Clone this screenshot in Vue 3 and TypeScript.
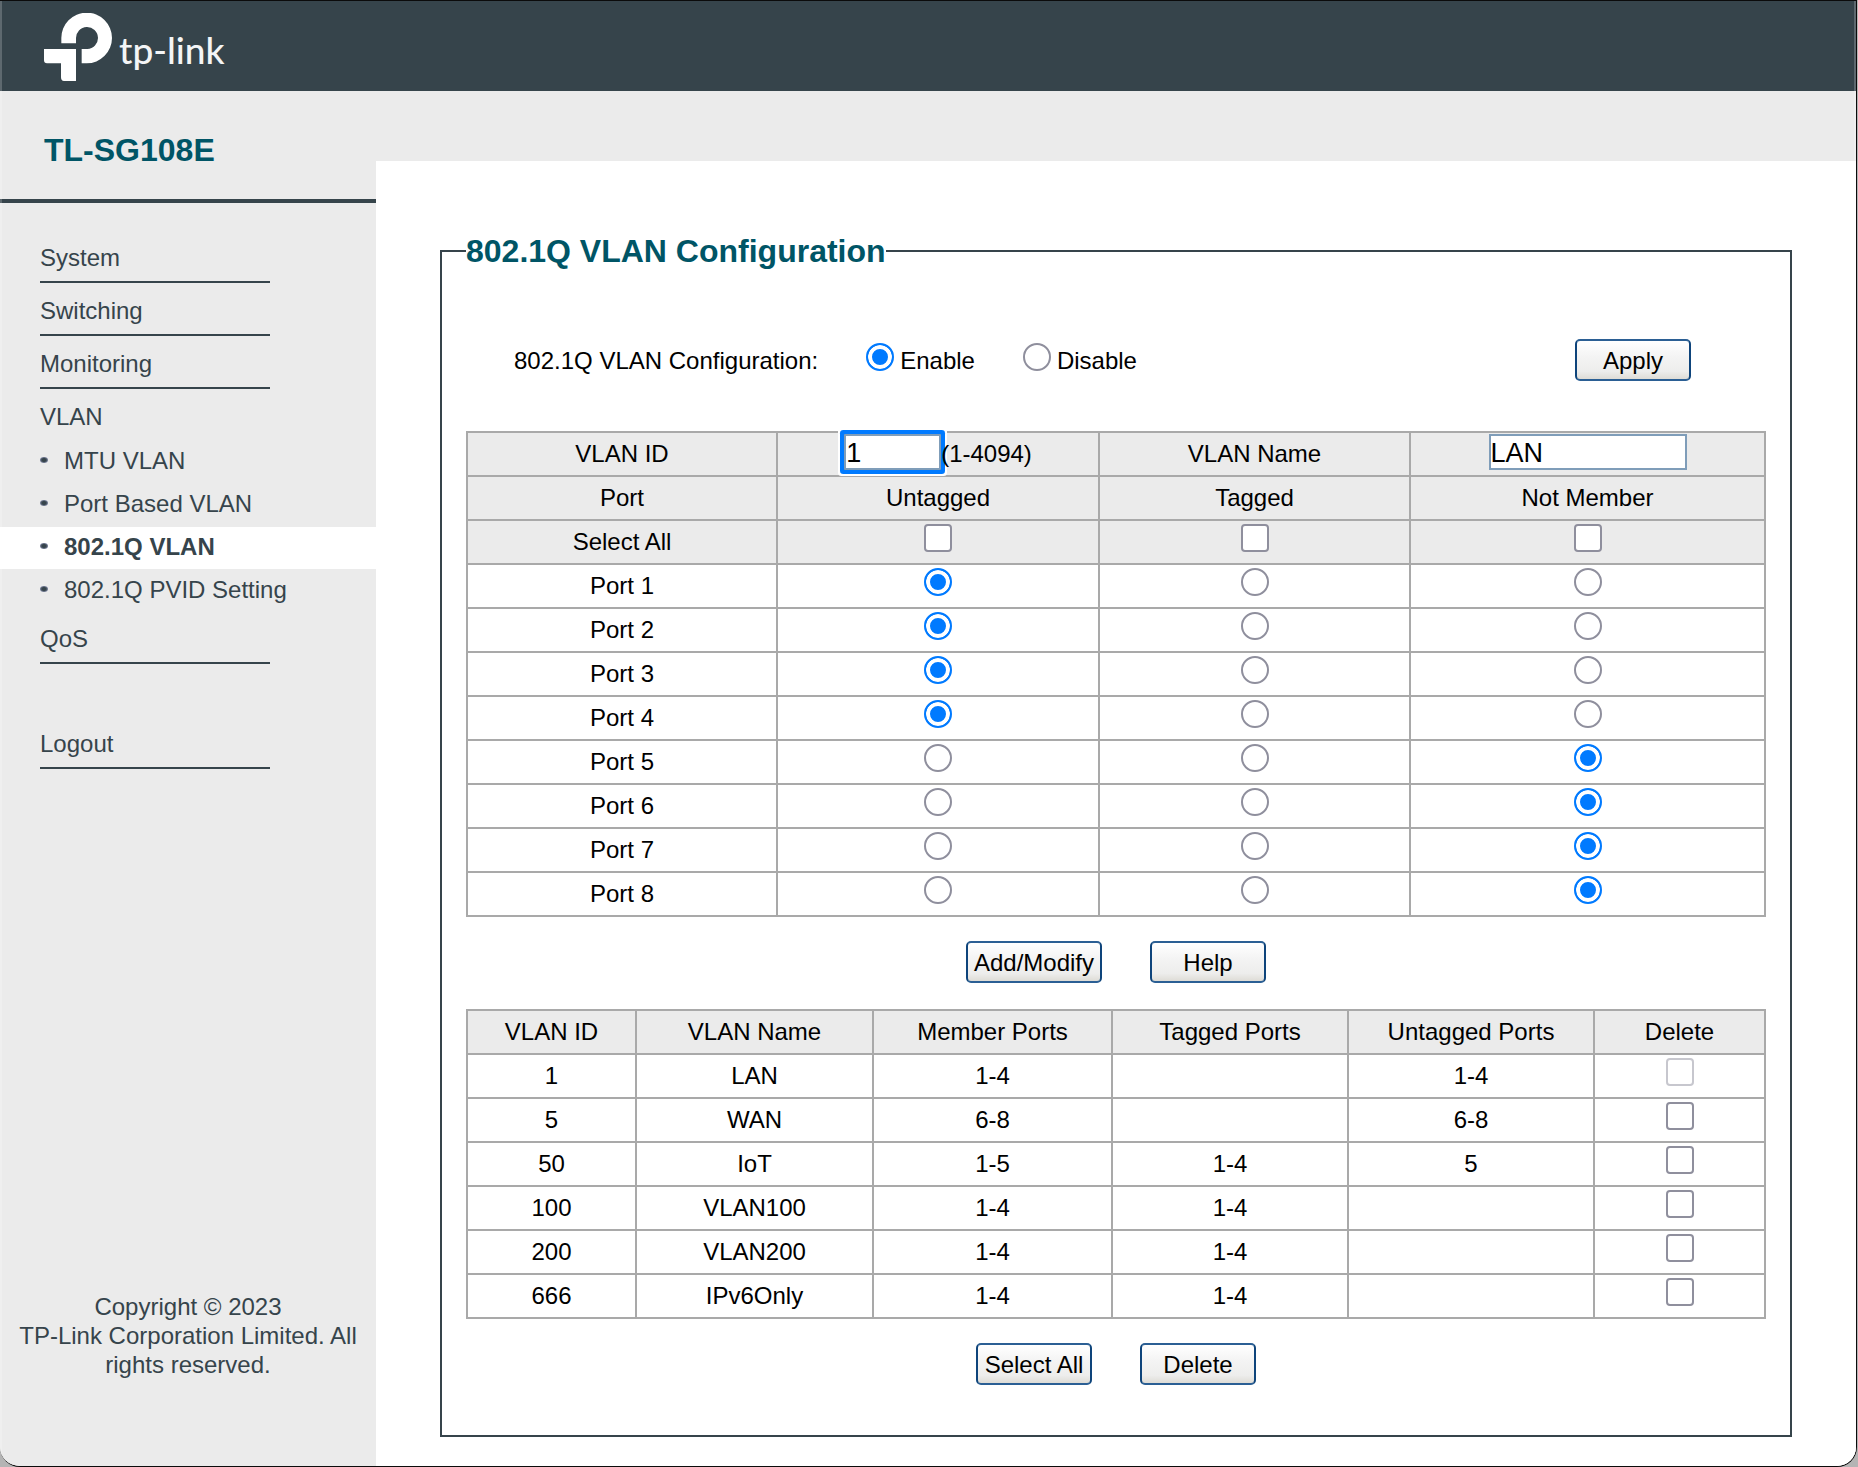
<script setup lang="ts">
import { reactive, ref } from 'vue'

type Membership = 'untagged' | 'tagged' | 'none'

interface VlanRow {
  id: number
  name: string
  members: string
  tagged: string
  untagged: string
  locked: boolean
  marked: boolean
}

const mainMenu = ['System', 'Switching', 'Monitoring']
const vlanMenu = ['MTU VLAN', 'Port Based VLAN', '802.1Q VLAN', '802.1Q PVID Setting']
const activeItem = '802.1Q VLAN'

const mode = ref('enable')
const vlanId = ref('1')
const vlanName = ref('LAN')

const memberships: { key: Membership; label: string }[] = [
  { key: 'untagged', label: 'Untagged' },
  { key: 'tagged', label: 'Tagged' },
  { key: 'none', label: 'Not Member' },
]

const ports = reactive<Membership[]>([
  'untagged', 'untagged', 'untagged', 'untagged', 'none', 'none', 'none', 'none',
])

function setAll(key: Membership) {
  ports.forEach((_, i) => (ports[i] = key))
}

function row(id: number, name: string, members: string, tagged: string, untagged: string): VlanRow {
  return { id, name, members, tagged, untagged, locked: id === 1, marked: false }
}

const vlans = reactive<VlanRow[]>([
  row(1, 'LAN', '1-4', '', '1-4'),
  row(5, 'WAN', '6-8', '', '6-8'),
  row(50, 'IoT', '1-5', '1-4', '5'),
  row(100, 'VLAN100', '1-4', '1-4', ''),
  row(200, 'VLAN200', '1-4', '1-4', ''),
  row(666, 'IPv6Only', '1-4', '1-4', ''),
])

const vlanHeads = ['VLAN ID', 'VLAN Name', 'Member Ports', 'Tagged Ports', 'Untagged Ports', 'Delete']

function markAll() {
  vlans.forEach((v) => { if (!v.locked) v.marked = true })
}

const portCols = [310, 322, 311, 355]
const vlanCols = [169, 237, 239, 236, 246, 171]
</script>

<template>
  <div class="window">
    <header class="banner">
      <svg class="mark" viewBox="132 39 204 204" aria-hidden="true">
        <path d="M184 130V115A76 76 0 1 1 260 190H245V147H262A33 33 0 1 0 228 115V130Z" />
        <path d="M132 147H228V243H192Q183 243 183 232V190H141Q132 190 132 181Z" />
      </svg>
      <span class="brand">tp-link</span>
    </header>

    <div class="body">
      <aside class="sidebar">
        <h1 class="model">TL-SG108E</h1>
        <nav class="menu">
          <a v-for="m in mainMenu" :key="m" class="item" href="#">{{ m }}</a>
          <a class="item open" href="#">VLAN</a>
          <ul class="submenu">
            <li v-for="m in vlanMenu" :key="m">
              <a class="sub" :class="{ active: m === activeItem }" href="#">{{ m }}</a>
            </li>
          </ul>
          <a class="item" href="#">QoS</a>
          <a class="item logout" href="#">Logout</a>
        </nav>
        <p class="copyright">Copyright © 2023<br />TP-Link Corporation Limited. All rights reserved.</p>
      </aside>

      <main class="main">
        <fieldset class="panel">
          <legend>802.1Q VLAN Configuration</legend>

          <div class="mode">
            <span class="caption">802.1Q VLAN Configuration:</span>
            <label><input v-model="mode" type="radio" name="mode" value="enable" /><span class="caption">Enable</span></label>
            <label><input v-model="mode" type="radio" name="mode" value="disable" /><span class="caption">Disable</span></label>
            <button type="button" class="apply">Apply</button>
          </div>

          <table>
            <colgroup>
              <col v-for="(w, i) in portCols" :key="i" :style="{ width: w + 'px' }" />
            </colgroup>
            <thead>
              <tr>
                <th><label for="vlan-id">VLAN ID</label></th>
                <th>
                  <div class="field">
                    <input id="vlan-id" v-model="vlanId" class="text id" type="text" />
                    <span>(1-4094)</span>
                  </div>
                </th>
                <th><label for="vlan-name">VLAN Name</label></th>
                <th>
                  <div class="field">
                    <input id="vlan-name" v-model="vlanName" class="text name" type="text" />
                  </div>
                </th>
              </tr>
              <tr>
                <th>Port</th>
                <th v-for="m in memberships" :key="m.key">{{ m.label }}</th>
              </tr>
              <tr>
                <th>Select All</th>
                <th v-for="m in memberships" :key="m.key" class="pick">
                  <input type="checkbox" :aria-label="'Select all ' + m.label" @change="setAll(m.key)" />
                </th>
              </tr>
            </thead>
            <tbody>
              <tr v-for="(_, i) in ports" :key="i">
                <td>Port {{ i + 1 }}</td>
                <td v-for="m in memberships" :key="m.key" class="pick">
                  <input
                    v-model="ports[i]"
                    type="radio"
                    :name="'port' + (i + 1)"
                    :value="m.key"
                    :aria-label="'Port ' + (i + 1) + ' ' + m.label"
                  />
                </td>
              </tr>
            </tbody>
          </table>

          <div class="actions">
            <button type="button">Add/Modify</button>
            <button type="button">Help</button>
          </div>

          <table class="list">
            <colgroup>
              <col v-for="(w, i) in vlanCols" :key="i" :style="{ width: w + 'px' }" />
            </colgroup>
            <thead>
              <tr>
                <th v-for="h in vlanHeads" :key="h">{{ h }}</th>
              </tr>
            </thead>
            <tbody>
              <tr v-for="v in vlans" :key="v.id">
                <td>{{ v.id }}</td>
                <td>{{ v.name }}</td>
                <td>{{ v.members }}</td>
                <td>{{ v.tagged }}</td>
                <td>{{ v.untagged }}</td>
                <td class="pick">
                  <input v-model="v.marked" type="checkbox" :disabled="v.locked" :aria-label="'Delete VLAN ' + v.id" />
                </td>
              </tr>
            </tbody>
          </table>

          <div class="actions">
            <button type="button" @click="markAll">Select All</button>
            <button type="button">Delete</button>
          </div>
        </fieldset>
      </main>
    </div>
  </div>
</template>

<style>
body {
  background: #b4b4b4;
}
</style>

<style scoped>
.window {
  position: relative;
  box-sizing: border-box;
  display: flex;
  flex-direction: column;
  min-height: 100vh;
  margin-right: 1px;
  overflow: hidden;
  border: solid #0b0b0b;
  border-width: 1px 1px 1px 0;
  border-radius: 0 0 20px 20px;
  background: #fff;
  font-family: "Liberation Sans", Arial, Helvetica, sans-serif;
  font-size: 24px;
  color: #000;
}

/* light rim along both window sides */
.window::after {
  content: "";
  position: absolute;
  inset: 0;
  border: solid rgba(255, 255, 255, 0.2);
  border-width: 0 2px;
  pointer-events: none;
}

.banner {
  box-sizing: border-box;
  display: flex;
  align-items: center;
  gap: 7px;
  height: 90px;
  padding: 2px 0 0 44px;
  background: #36444b;
}

.mark {
  width: 68px;
  height: 68px;
  fill: #fff;
}

.brand {
  padding-top: 6px;
  font-family: Lato, "Liberation Sans", sans-serif;
  font-size: 37px;
  font-weight: 500;
  line-height: 44px;
  color: #f4f5f6;
}

.body {
  flex: 1;
  display: flex;
}

.sidebar {
  flex: none;
  display: flex;
  flex-direction: column;
  width: 376px;
  background: #ebebeb;
  color: #36444b;
}

.model {
  margin: 0;
  padding: 41px 0 31px 44px;
  border-bottom: 4px solid #36444b;
  font-size: 32px;
  line-height: 36px;
  color: #005566;
}

.menu {
  display: flex;
  flex-direction: column;
  padding-top: 27px;
}

.item {
  width: 230px;
  margin-left: 40px;
  padding-top: 4px;
  border-bottom: 2px solid #36444b;
  line-height: 47px;
  color: inherit;
  text-decoration: none;
}

.item.open {
  border-bottom: 0;
}

.item.logout {
  margin-top: 52px;
}

.submenu {
  display: flex;
  flex-direction: column;
  gap: 1px;
  margin: 1px 0 -1px;
  padding: 0;
  list-style: none;
}

.sub {
  display: flex;
  align-items: center;
  gap: 16px;
  padding: 0 0 2px 40px;
  line-height: 40px;
  color: inherit;
  text-decoration: none;
}

.sub::before {
  content: "";
  width: 8px;
  height: 6px;
  margin-bottom: 3px;
  border-radius: 50%;
  background: radial-gradient(closest-side, #36444b 50%, #7c84a0);
}

.sub.active {
  background: #fff;
  font-weight: bold;
}

.copyright {
  margin: auto 0 0;
  padding: 0 16px 87px;
  line-height: 29px;
  text-align: center;
}

.main {
  flex: 1;
  min-width: 0;
  padding: 142px 64px 29px;
  background: linear-gradient(#ebebeb 70px, #fff 70px);
}

.panel {
  min-width: 0;
  margin: 0;
  padding: 70px 24px 50px;
  border: 2px solid #36444b;
}

legend {
  padding: 0;
  font-size: 32px;
  font-weight: bold;
  line-height: 36px;
  color: #005566;
}

.mode {
  display: flex;
  align-items: center;
  gap: 48px;
  padding: 0 75px 50px 48px;
}

.mode label {
  display: flex;
  align-items: center;
  gap: 6px;
}

.mode input {
  margin-bottom: 6px;
}

.caption {
  padding-top: 2px;
}

.apply {
  margin-left: auto;
}

table {
  width: 100%;
  table-layout: fixed;
  border-collapse: collapse;
}

th,
td {
  box-sizing: border-box;
  height: 44px;
  padding: 0;
  border: 2px solid #a9a9a9;
  font-weight: normal;
  line-height: 28px;
  text-align: center;
}

th {
  background: #ebebeb;
}

.pick {
  padding-top: 3px;
  vertical-align: top;
  line-height: 0;
}

.field {
  display: flex;
  align-items: center;
  justify-content: center;
  height: 42px;
}

.field span {
  position: relative;
}

input {
  box-sizing: border-box;
  margin: 0;
}

.text {
  height: 36px;
  margin-bottom: 4px;
  padding: 2px 0 0;
  border: 2px solid #7f9db9;
  background: #fff;
  font: 27px "Liberation Sans", Arial, sans-serif;
  line-height: 30px;
  color: #000;
  outline: 0;
}

.text.id {
  width: 97px;
  border-radius: 1px;
  box-shadow: 0 0 0 4px #007aff, 0 0 0 6px #fff;
}

.text.name {
  width: 198px;
}

input[type="radio"],
input[type="checkbox"] {
  appearance: none;
  width: 28px;
  height: 28px;
  border: 2px solid #8f8f9d;
  background: #fff;
}

input[type="radio"] {
  border-radius: 50%;
}

input[type="checkbox"] {
  border-radius: 4px;
}

input[type="radio"]:checked,
input[type="checkbox"]:checked {
  border-color: #007aff;
  background: #007aff;
  box-shadow: inset 0 0 0 4px #fff;
}

input[type="checkbox"]:disabled {
  border-color: #c7c7ce;
}

button {
  box-sizing: border-box;
  min-width: 116px;
  height: 42px;
  padding: 2px 6px 0;
  border: 2px solid;
  border-color: #2b5f94 #0e447b #2b5f94;
  border-radius: 5px;
  background: linear-gradient(#fff, #f4f4f4 40%, #ededec 80%, #dedcd6);
  font: 24px "Liberation Sans", Arial, sans-serif;
  color: #000;
}

.actions {
  display: flex;
  justify-content: center;
  gap: 48px;
  padding-top: 24px;
}

.list {
  margin-top: 26px;
}
</style>
